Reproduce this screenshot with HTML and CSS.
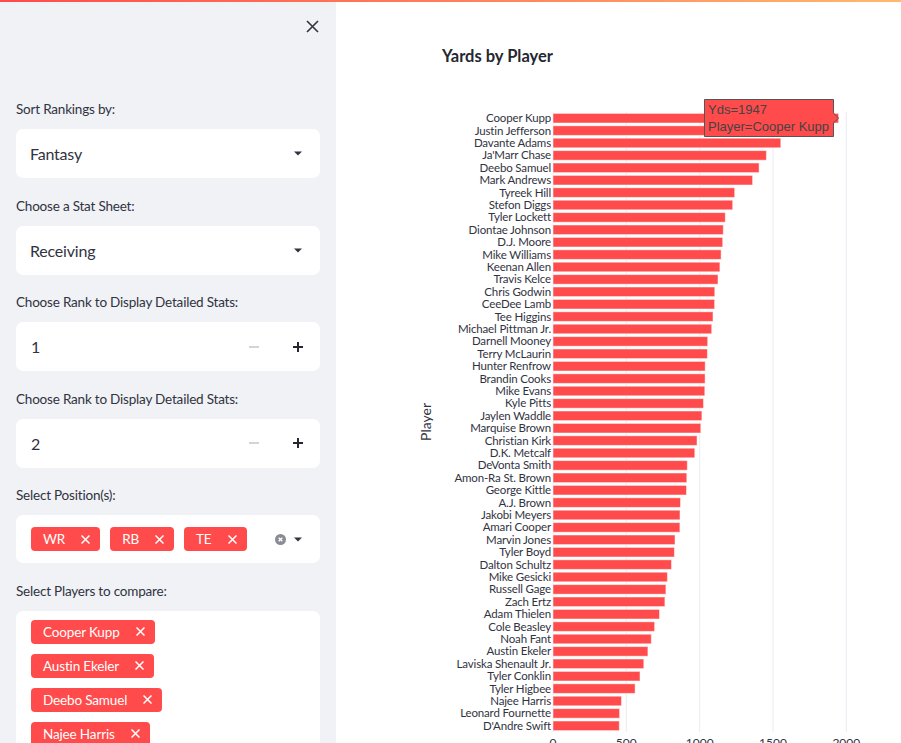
FILE: index.html
```html
<!DOCTYPE html>
<html lang="en">
<head>
<meta charset="utf-8">
<title>Yards by Player</title>
<link rel="stylesheet" href="styles.css">
</head>
<body>
<div class="decoration"></div>
<div class="app">
  <aside class="sidebar">
    <div class="sidebar-head">
      <button class="close" aria-label="Close sidebar">
        <svg width="13" height="13" viewBox="0 0 13 13"><path class="close-path" d="M1 1 L12 12 M12 1 L1 12"/></svg>
      </button>
    </div>
    <div class="sidebar-body">
      <div class="field">
        <div class="label">Sort Rankings by:</div>
        <div class="select"><span class="value">Fantasy</span><svg class="caret" width="8" height="5" viewBox="0 0 8 5"><path d="M0 0.5 H8 L4 4.5 Z"/></svg></div>
      </div>
      <div class="field">
        <div class="label">Choose a Stat Sheet:</div>
        <div class="select"><span class="value">Receiving</span><svg class="caret" width="8" height="5" viewBox="0 0 8 5"><path d="M0 0.5 H8 L4 4.5 Z"/></svg></div>
      </div>
      <div class="field">
        <div class="label">Choose Rank to Display Detailed Stats:</div>
        <div class="number">
          <span class="num-value">1</span>
          <span class="step minus"><svg width="10" height="10" viewBox="0 0 10 10"><path d="M0 5 H10"/></svg></span>
          <span class="step plus"><svg width="10" height="10" viewBox="0 0 10 10"><path d="M0 5 H10 M5 0 V10"/></svg></span>
        </div>
      </div>
      <div class="field">
        <div class="label">Choose Rank to Display Detailed Stats:</div>
        <div class="number">
          <span class="num-value">2</span>
          <span class="step minus"><svg width="10" height="10" viewBox="0 0 10 10"><path d="M0 5 H10"/></svg></span>
          <span class="step plus"><svg width="10" height="10" viewBox="0 0 10 10"><path d="M0 5 H10 M5 0 V10"/></svg></span>
        </div>
      </div>
      <div class="field">
        <div class="label">Select Position(s):</div>
        <div class="multi">
          <span class="tag">WR<svg class="tag-x" width="9" height="9" viewBox="0 0 9 9"><path d="M0.5 0.5 L8.5 8.5 M8.5 0.5 L0.5 8.5"/></svg></span>
          <span class="tag">RB<svg class="tag-x" width="9" height="9" viewBox="0 0 9 9"><path d="M0.5 0.5 L8.5 8.5 M8.5 0.5 L0.5 8.5"/></svg></span>
          <span class="tag">TE<svg class="tag-x" width="9" height="9" viewBox="0 0 9 9"><path d="M0.5 0.5 L8.5 8.5 M8.5 0.5 L0.5 8.5"/></svg></span>
          <span class="multi-icons">
            <svg class="clear" width="11" height="11" viewBox="0 0 11 11"><circle cx="5.5" cy="5.5" r="5.5"/><path d="M3.7 3.7 L7.3 7.3 M7.3 3.7 L3.7 7.3"/></svg>
            <svg class="caret" width="8" height="5" viewBox="0 0 8 5"><path d="M0 0.5 H8 L4 4.5 Z"/></svg>
          </span>
        </div>
      </div>
      <div class="field">
        <div class="label">Select Players to compare:</div>
        <div class="multi-list">
          <span class="tag">Cooper Kupp<svg class="tag-x" width="9" height="9" viewBox="0 0 9 9"><path d="M0.5 0.5 L8.5 8.5 M8.5 0.5 L0.5 8.5"/></svg></span>
          <span class="tag">Austin Ekeler<svg class="tag-x" width="9" height="9" viewBox="0 0 9 9"><path d="M0.5 0.5 L8.5 8.5 M8.5 0.5 L0.5 8.5"/></svg></span>
          <span class="tag">Deebo Samuel<svg class="tag-x" width="9" height="9" viewBox="0 0 9 9"><path d="M0.5 0.5 L8.5 8.5 M8.5 0.5 L0.5 8.5"/></svg></span>
          <span class="tag">Najee Harris<svg class="tag-x" width="9" height="9" viewBox="0 0 9 9"><path d="M0.5 0.5 L8.5 8.5 M8.5 0.5 L0.5 8.5"/></svg></span>
          <span class="tag">Leonard Fournette<svg class="tag-x" width="9" height="9" viewBox="0 0 9 9"><path d="M0.5 0.5 L8.5 8.5 M8.5 0.5 L0.5 8.5"/></svg></span>
        </div>
      </div>
    </div>
  </aside>
  <main class="main">
    <svg class="chart" width="565" height="743" viewBox="0 0 565 743">
      <text class="title" x="106" y="62">Yards by Player</text>
      <g class="grid">
        <line x1="217" y1="112" x2="217" y2="732"/>
        <line x1="290.3" y1="112" x2="290.3" y2="732"/>
        <line x1="363.7" y1="112" x2="363.7" y2="732"/>
        <line x1="437" y1="112" x2="437" y2="732"/>
        <line x1="510.3" y1="112" x2="510.3" y2="732"/>
      </g>
      <g class="bars">
        <rect x="217" y="113.4" width="285.6" height="9.6"/>
        <rect x="217" y="125.8" width="237.0" height="9.6"/>
        <rect x="217" y="138.2" width="227.8" height="9.6"/>
        <rect x="217" y="150.6" width="213.4" height="9.6"/>
        <rect x="217" y="163.0" width="206.1" height="9.6"/>
        <rect x="217" y="175.4" width="199.6" height="9.6"/>
        <rect x="217" y="187.8" width="181.7" height="9.6"/>
        <rect x="217" y="200.2" width="179.7" height="9.6"/>
        <rect x="217" y="212.6" width="172.3" height="9.6"/>
        <rect x="217" y="225.0" width="170.3" height="9.6"/>
        <rect x="217" y="237.4" width="169.7" height="9.6"/>
        <rect x="217" y="249.8" width="168.1" height="9.6"/>
        <rect x="217" y="262.2" width="166.9" height="9.6"/>
        <rect x="217" y="274.6" width="165.0" height="9.6"/>
        <rect x="217" y="287.0" width="161.8" height="9.6"/>
        <rect x="217" y="299.4" width="161.6" height="9.6"/>
        <rect x="217" y="311.8" width="160.0" height="9.6"/>
        <rect x="217" y="324.2" width="158.7" height="9.6"/>
        <rect x="217" y="336.6" width="154.7" height="9.6"/>
        <rect x="217" y="349.0" width="154.4" height="9.6"/>
        <rect x="217" y="361.4" width="152.2" height="9.6"/>
        <rect x="217" y="373.8" width="152.1" height="9.6"/>
        <rect x="217" y="386.2" width="151.8" height="9.6"/>
        <rect x="217" y="398.6" width="150.5" height="9.6"/>
        <rect x="217" y="411.0" width="148.9" height="9.6"/>
        <rect x="217" y="423.4" width="147.8" height="9.6"/>
        <rect x="217" y="435.8" width="144.0" height="9.6"/>
        <rect x="217" y="448.2" width="141.8" height="9.6"/>
        <rect x="217" y="460.6" width="134.3" height="9.6"/>
        <rect x="217" y="473.0" width="133.8" height="9.6"/>
        <rect x="217" y="485.4" width="133.5" height="9.6"/>
        <rect x="217" y="497.8" width="127.5" height="9.6"/>
        <rect x="217" y="510.2" width="127.0" height="9.6"/>
        <rect x="217" y="522.6" width="126.9" height="9.6"/>
        <rect x="217" y="535.0" width="122.0" height="9.6"/>
        <rect x="217" y="547.4" width="121.4" height="9.6"/>
        <rect x="217" y="559.8" width="118.5" height="9.6"/>
        <rect x="217" y="572.2" width="114.4" height="9.6"/>
        <rect x="217" y="584.6" width="112.9" height="9.6"/>
        <rect x="217" y="597.0" width="111.9" height="9.6"/>
        <rect x="217" y="609.4" width="106.5" height="9.6"/>
        <rect x="217" y="621.8" width="101.6" height="9.6"/>
        <rect x="217" y="634.2" width="98.3" height="9.6"/>
        <rect x="217" y="646.6" width="94.9" height="9.6"/>
        <rect x="217" y="659.0" width="90.8" height="9.6"/>
        <rect x="217" y="671.4" width="87.0" height="9.6"/>
        <rect x="217" y="683.8" width="82.1" height="9.6"/>
        <rect x="217" y="696.2" width="68.5" height="9.6"/>
        <rect x="217" y="708.6" width="66.6" height="9.6"/>
        <rect x="217" y="721.0" width="66.3" height="9.6"/>
      </g>
      <g class="ylabels">
        <text x="215" y="122.2">Cooper Kupp</text>
        <text x="215" y="134.6">Justin Jefferson</text>
        <text x="215" y="147.0">Davante Adams</text>
        <text x="215" y="159.4">Ja'Marr Chase</text>
        <text x="215" y="171.8">Deebo Samuel</text>
        <text x="215" y="184.2">Mark Andrews</text>
        <text x="215" y="196.6">Tyreek Hill</text>
        <text x="215" y="209.0">Stefon Diggs</text>
        <text x="215" y="221.4">Tyler Lockett</text>
        <text x="215" y="233.8">Diontae Johnson</text>
        <text x="215" y="246.2">D.J. Moore</text>
        <text x="215" y="258.6">Mike Williams</text>
        <text x="215" y="271.0">Keenan Allen</text>
        <text x="215" y="283.4">Travis Kelce</text>
        <text x="215" y="295.8">Chris Godwin</text>
        <text x="215" y="308.2">CeeDee Lamb</text>
        <text x="215" y="320.6">Tee Higgins</text>
        <text x="215" y="333.0">Michael Pittman Jr.</text>
        <text x="215" y="345.4">Darnell Mooney</text>
        <text x="215" y="357.8">Terry McLaurin</text>
        <text x="215" y="370.2">Hunter Renfrow</text>
        <text x="215" y="382.6">Brandin Cooks</text>
        <text x="215" y="395.0">Mike Evans</text>
        <text x="215" y="407.4">Kyle Pitts</text>
        <text x="215" y="419.8">Jaylen Waddle</text>
        <text x="215" y="432.2">Marquise Brown</text>
        <text x="215" y="444.6">Christian Kirk</text>
        <text x="215" y="457.0">D.K. Metcalf</text>
        <text x="215" y="469.4">DeVonta Smith</text>
        <text x="215" y="481.8">Amon-Ra St. Brown</text>
        <text x="215" y="494.2">George Kittle</text>
        <text x="215" y="506.6">A.J. Brown</text>
        <text x="215" y="519.0">Jakobi Meyers</text>
        <text x="215" y="531.4">Amari Cooper</text>
        <text x="215" y="543.8">Marvin Jones</text>
        <text x="215" y="556.2">Tyler Boyd</text>
        <text x="215" y="568.6">Dalton Schultz</text>
        <text x="215" y="581.0">Mike Gesicki</text>
        <text x="215" y="593.4">Russell Gage</text>
        <text x="215" y="605.8">Zach Ertz</text>
        <text x="215" y="618.2">Adam Thielen</text>
        <text x="215" y="630.6">Cole Beasley</text>
        <text x="215" y="643.0">Noah Fant</text>
        <text x="215" y="655.4">Austin Ekeler</text>
        <text x="215" y="667.8">Laviska Shenault Jr.</text>
        <text x="215" y="680.2">Tyler Conklin</text>
        <text x="215" y="692.6">Tyler Higbee</text>
        <text x="215" y="705.0">Najee Harris</text>
        <text x="215" y="717.4">Leonard Fournette</text>
        <text x="215" y="729.8">D'Andre Swift</text>
      </g>
      <g class="xlabels">
        <text x="217" y="747">0</text>
        <text x="290.3" y="747">500</text>
        <text x="363.7" y="747">1000</text>
        <text x="437" y="747">1500</text>
        <text x="510.3" y="747">2000</text>
      </g>
      <text class="axis-title" transform="translate(95 422) rotate(-90)">Player</text>
      <g class="hover">
        <path d="M368.5 99.5 H497.5 V113 L502.5 118 L497.5 123 V136.5 H368.5 Z"/>
        <text x="372" y="114">Yds=1947</text>
        <text x="372" y="131">Player=Cooper Kupp</text>
      </g>
    </svg>
  </main>
</div>
</body>
</html>
```

FILE: styles.css
```css
* { box-sizing: border-box; }

html, body {
  margin: 0;
  height: 743px;
  overflow: hidden;
}

body {
  font-family: Lato, "Noto Sans", "Liberation Sans", sans-serif;
  color: #31333f;
  background: #ffffff;
}

.decoration {
  position: fixed;
  top: 0;
  left: 0;
  right: 0;
  height: 2px;
  background: linear-gradient(90deg, #ff4b4b 0%, #ff8a5e 60%, #ffb870 100%);
  z-index: 10;
}

.app {
  display: flex;
  height: 743px;
}

/* ---------- sidebar ---------- */
.sidebar {
  width: 336px;
  flex: none;
  background: #f0f2f6;
  overflow: hidden;
}

.sidebar-head {
  display: flex;
  justify-content: flex-end;
  padding: 14px 12px 0 0;
  height: 38px;
}

.close {
  width: 24px;
  height: 24px;
  border: 0;
  padding: 0;
  background: none;
  display: flex;
  align-items: center;
  justify-content: center;
}

.close-path {
  stroke: #31333f;
  stroke-width: 1.6;
  fill: none;
}

.sidebar-body {
  padding: 61px 16px 0 16px;
  display: flex;
  flex-direction: column;
  gap: 17.5px;
}

.field {
  display: flex;
  flex-direction: column;
}

.label {
  font-size: 13.5px;
  letter-spacing: -0.2px;
  line-height: 21px;
  height: 21px;
  margin-bottom: 9px;
  color: #31333f;
}

.select {
  height: 49px;
  background: #ffffff;
  border-radius: 7px;
  display: flex;
  align-items: center;
  justify-content: space-between;
  padding: 0 18px 0 14px;
  font-size: 16px;
  letter-spacing: -0.2px;
}

.caret path {
  fill: #31333f;
}

.number {
  height: 49px;
  background: #ffffff;
  border-radius: 7px;
  display: flex;
  align-items: center;
  padding-left: 15px;
  font-size: 16px;
}

.num-value {
  flex: 1;
}

.step {
  width: 44px;
  height: 49px;
  display: flex;
  align-items: center;
  justify-content: center;
}

.step path {
  fill: none;
  stroke-width: 2;
}

.minus path { stroke: #d3d5dc; }
.plus path { stroke: #262730; }

.multi {
  height: 48px;
  background: #ffffff;
  border-radius: 7px;
  display: flex;
  align-items: center;
  gap: 10px;
  padding: 0 18px 0 15px;
}

.multi-icons {
  margin-left: auto;
  display: flex;
  align-items: center;
  gap: 8px;
}

.clear circle { fill: #8a8c95; }
.clear path { stroke: #ffffff; stroke-width: 1.4; fill: none; }

.multi-list {
  background: #ffffff;
  border-radius: 7px;
  display: flex;
  flex-direction: column;
  align-items: flex-start;
  gap: 10px;
  padding: 9px 15px 20px;
}

.tag {
  display: inline-flex;
  align-items: center;
  gap: 16px;
  height: 24px;
  padding: 0 10px 0 12px;
  background: #ff4b4b;
  border-radius: 4px;
  color: #ffffff;
  font-size: 13.5px;
  letter-spacing: -0.15px;
  white-space: nowrap;
}

.tag-x path {
  stroke: #ffffff;
  stroke-width: 1.5;
  fill: none;
}

/* ---------- main / chart ---------- */
.main {
  flex: 1;
  min-width: 0;
  overflow: hidden;
}

.chart {
  display: block;
  font-family: Lato, "Noto Sans", "Liberation Sans", sans-serif;
}

.title {
  font-size: 16.5px;
  font-weight: 700;
  fill: #262730;
}

.grid line {
  stroke: #e9ecf4;
  stroke-width: 1;
}

.bars rect {
  fill: #ff4b4b;
  stroke: rgba(255, 255, 255, 0.5);
  stroke-width: 1;
}

.ylabels text {
  font-size: 11.5px;
  letter-spacing: -0.15px;
  fill: #31333f;
  text-anchor: end;
}

.xlabels text {
  font-size: 12px;
  fill: #31333f;
  text-anchor: middle;
}

.axis-title {
  font-size: 14px;
  fill: #31333f;
  text-anchor: middle;
}

.hover path {
  fill: #ff4b4b;
  stroke: #555555;
  stroke-width: 1;
}

.hover text {
  font-family: "Liberation Sans", Arial, sans-serif;
  font-size: 13px;
  fill: #444444;
}
```
